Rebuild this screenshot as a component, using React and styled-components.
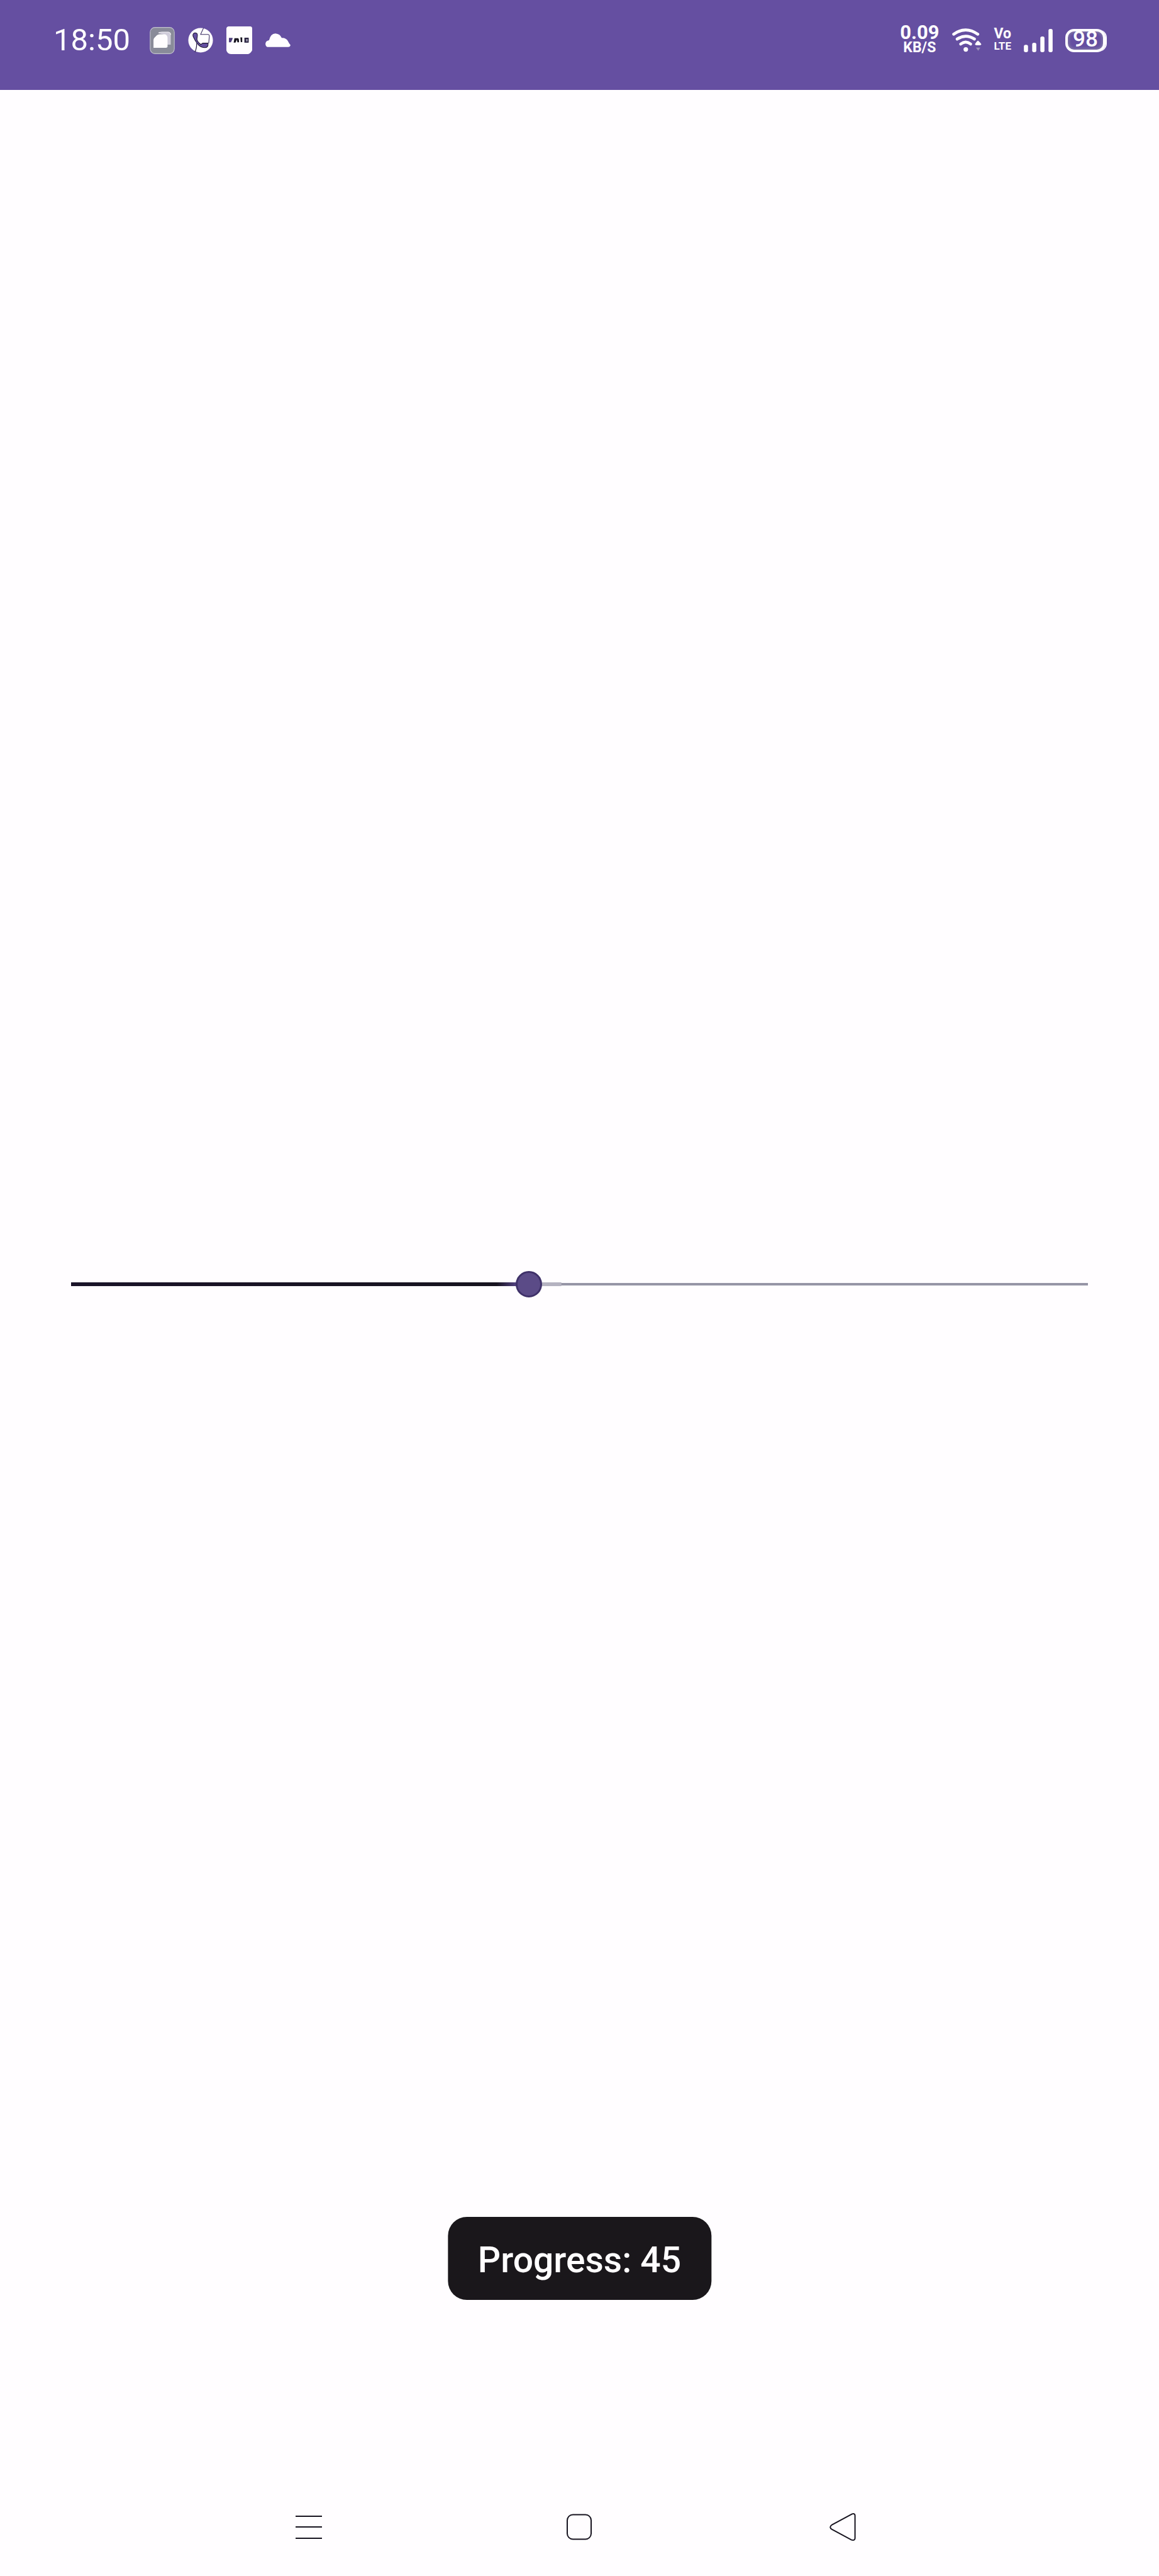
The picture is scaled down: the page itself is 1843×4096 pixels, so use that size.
import React, { useState } from "react";
import styled, { createGlobalStyle } from "styled-components";

const GlobalStyle = createGlobalStyle`
  * { box-sizing: border-box; }
  body {
    margin: 0;
    background: #fffdff;
    font-family: Roboto, "Noto Sans", sans-serif;
  }
`;

const Screen = styled.div`
  display: flex;
  flex-direction: column;
  min-height: 100vh;
`;

const StatusBar = styled.header`
  display: flex;
  justify-content: space-between;
  align-items: center;
  height: 143px;
  padding: 0 82px 15px 85px;
  background: #654fa1;
  color: #fffdff;
`;

const StatusGroup = styled.div`
  display: flex;
  align-items: center;
  gap: ${(p) => p.$gap}px;
`;

const Clock = styled.time`
  margin-right: 10px;
  font-size: 49px;
  line-height: 56px;
`;

const Glyph = styled.svg`
  display: block;
  flex: none;
  width: ${(p) => p.$w}px;
  height: ${(p) => p.$h}px;
`;

const Stack = styled.div`
  display: flex;
  flex-direction: column;
  align-items: center;
  font-weight: 700;
`;

const StackLine = styled.span`
  font-size: ${(p) => p.$size}px;
  line-height: ${(p) => p.$line}px;
`;

const Battery = styled.div`
  display: flex;
  align-items: center;
  justify-content: center;
  width: 64px;
  height: 37px;
  margin-right: 3px;
  padding-bottom: 3px;
  border: 4px solid #fffdff;
  border-radius: 14px;
  box-shadow: inset 0 0 5px 1px #8c87a8, 3px 0 0 -1px #fffdff;
  font-size: 35px;
  line-height: 26px;
  font-weight: 500;
`;

const Main = styled.main`
  position: relative;
  flex: 1;
  display: flex;
  align-items: center;
  padding: 0 92px;
`;

const Slider = styled.input`
  appearance: none;
  flex: 1;
  min-width: 0;
  height: 42px;
  margin: 0;
  outline: none;
  --done: calc((100% - 42px) * var(--ratio));
  background:
    linear-gradient(90deg, #1a1429 0%, #17131f 93%, #4f3f7c 97%) 21px 50% / var(--done) 6px no-repeat,
    linear-gradient(90deg, #d0ced8, #b4b2c0) 21px 50% / calc(var(--done) + 52px) 6px no-repeat,
    linear-gradient(#9695a6, #9695a6) calc(100% - 21px) 50% / calc(100% - 42px) 4px no-repeat;

  &::-webkit-slider-runnable-track {
    height: 42px;
    background: transparent;
  }

  &::-webkit-slider-thumb {
    appearance: none;
    width: 42px;
    height: 42px;
    border: 3px solid #3f3169;
    border-radius: 50%;
    background: #5b4b87;
    box-shadow: none;
  }
`;

const Toast = styled.output`
  position: absolute;
  bottom: 283px;
  left: 50%;
  transform: translateX(-50%);
  padding: 36px 48px 30px;
  border-radius: 30px;
  background: #1a171b;
  color: #fffdff;
  font-size: 57px;
  line-height: 66px;
  font-weight: 500;
  white-space: nowrap;
`;

const NavBar = styled.nav`
  display: grid;
  grid-template-columns: 430fr 430fr 409fr;
  height: 156px;
  padding: 0 16.2% 0 15%;
`;

const NavButton = styled.button`
  display: grid;
  place-items: center;
  padding: 0;
  border: 0;
  background: none;
  color: #17131f;
`;

function GalleryIcon() {
  return (
    <Glyph $w={40} $h={43} viewBox="0 0 188 204">
      <rect x="3" y="3" width="182" height="198" rx="36" fill="#898b99" stroke="#c3c2cf" strokeWidth="5" />
      <path d="M62 46 Q74 38 92 38 H140 Q158 40 158 60 V133 H130 V80 L112 58Z" fill="#cfccda" />
      <path d="M66 44 Q76 38 92 38 H140 Q156 40 158 58" fill="none" stroke="#f4f1f8" strokeWidth="5" />
      <path d="M28 156 V96 Q30 84 42 74 L54 62 Q62 54 78 55 H112 Q132 58 134 80 V148 Q132 156 122 156Z" fill="#fffdff" />
    </Glyph>
  );
}

function CallIcon() {
  return (
    <Glyph $w={40} $h={40} viewBox="0 0 188 190">
      <circle cx="94" cy="95" r="93" fill="#fffdff" />
      <path d="M116 2 L94 51 H148 Q161 51 160 66 L155 118" fill="none" stroke="#3a2d62" strokeWidth="5" />
      <path
        d="M36 58 Q36 39 54 39 Q71 40 70 60 L66 88 Q72 110 96 127 L110 117 H150 Q154 150 128 151 Q98 150 80 132 L65 115 Q50 94 38 68Z"
        fill="#654fa1"
        stroke="#1d1730"
        strokeWidth="5"
      />
      <path d="M64 118 Q66 148 52 184" fill="none" stroke="#2a2048" strokeWidth="6" />
    </Glyph>
  );
}

function AppTileIcon() {
  return (
    <Glyph $w={41} $h={44} viewBox="0 0 192 206">
      <path d="M14 0 H178 Q192 2 192 16 V178 Q180 202 162 206 H34 Q6 204 0 178 V14 Q2 2 14 0Z" fill="#fffdff" />
      <path d="M19 86 H46 V93 L34 118 H19Z" fill="#4b3c7a" />
      <path d="M54 121 L60 88 H88 Q95 94 94 118 H82 L78 98 L68 121Z" fill="#17131f" />
      <path d="M104 82 H118 V117 H107Z" fill="#17131f" />
      <path d="M134 84 H166 V121 H134Z" fill="#2a2342" />
      <path d="M147 94 H158 V112 H147Z" fill="#a8a5b8" />
    </Glyph>
  );
}

function CloudIcon() {
  return (
    <Glyph $w={40} $h={22} viewBox="0 0 188 104">
      <path
        d="M14 103 Q0 96 0 78 Q2 56 27 52 Q38 2 75 1 Q110 4 122 34 Q156 32 170 60 Q176 74 188 88 Q186 103 170 103Z"
        fill="#fffdff"
      />
    </Glyph>
  );
}

function WifiIcon() {
  return (
    <Glyph $w={47} $h={38} viewBox="0 0 220 178">
      <g fill="none" stroke="#fffdff" strokeWidth="22" strokeLinecap="round">
        <path d="M12 44 Q101 -20 191 44" />
        <path d="M38 80 Q101 38 166 80" />
        <path d="M64 117 Q101 88 138 117" />
      </g>
      <circle cx="102" cy="157" r="17" fill="#fffdff" />
      <path d="M192 91 Q208 102 218 118 Q216 126 206 126 H182 Q172 126 170 118 Q178 102 192 91Z" fill="#fffdff" />
      <path d="M178 144 H210 L194 168Z" fill="#9d94b8" />
    </Glyph>
  );
}

function SignalIcon() {
  const bars = [[0, 55], [62, 70], [123, 117], [184, 174]];
  return (
    <Glyph $w={46} $h={37} viewBox="0 0 215 174">
      {bars.map(([x, h]) => (
        <rect key={x} x={x} y={174 - h} width="31" height={h} rx="13" fill="#fffdff" />
      ))}
    </Glyph>
  );
}

export default function App() {
  const [progress, setProgress] = useState(45);

  return (
    <>
      <GlobalStyle />
      <Screen>
        <StatusBar>
          <StatusGroup $gap={21}>
            <Clock>18:50</Clock>
            <GalleryIcon />
            <CallIcon />
            <AppTileIcon />
            <CloudIcon />
          </StatusGroup>
          <StatusGroup $gap={20}>
            <Stack>
              <StackLine $size={31} $line={24}>0.09</StackLine>
              <StackLine $size={23} $line={24}>KB/S</StackLine>
            </Stack>
            <WifiIcon />
            <Stack>
              <StackLine $size={23} $line={18}>Vo</StackLine>
              <StackLine $size={17} $line={20}>LTE</StackLine>
            </Stack>
            <SignalIcon />
            <Battery>98</Battery>
          </StatusGroup>
        </StatusBar>
        <Main>
          <Slider
            type="range"
            min="0"
            max="100"
            aria-label="Progress"
            value={progress}
            onChange={(e) => setProgress(Number(e.target.value))}
            style={{ "--ratio": progress / 100 }}
          />
          <Toast>Progress: {progress}</Toast>
        </Main>
        <NavBar>
          <NavButton aria-label="Recent apps">
            <Glyph $w={42} $h={44} viewBox="0 0 42 44">
              <path d="M0 5H42M0 22H42M0 40H42" stroke="currentColor" strokeWidth="2" />
            </Glyph>
          </NavButton>
          <NavButton aria-label="Home">
            <Glyph $w={40} $h={42} viewBox="0 0 40 42">
              <rect x="1" y="1.5" width="38" height="39" rx="9" fill="none" stroke="currentColor" strokeWidth="2" />
            </Glyph>
          </NavButton>
          <NavButton aria-label="Back">
            <Glyph $w={42} $h={44} viewBox="0 0 42 44">
              <path
                d="M36 1.4 L4 18.5 Q-1.5 22.5 4 26 L35 42.6 Q40.6 44 40.6 40 V4 Q40.6 0 36 1.4Z"
                fill="none"
                stroke="currentColor"
                strokeWidth="2"
              />
            </Glyph>
          </NavButton>
        </NavBar>
      </Screen>
    </>
  );
}
